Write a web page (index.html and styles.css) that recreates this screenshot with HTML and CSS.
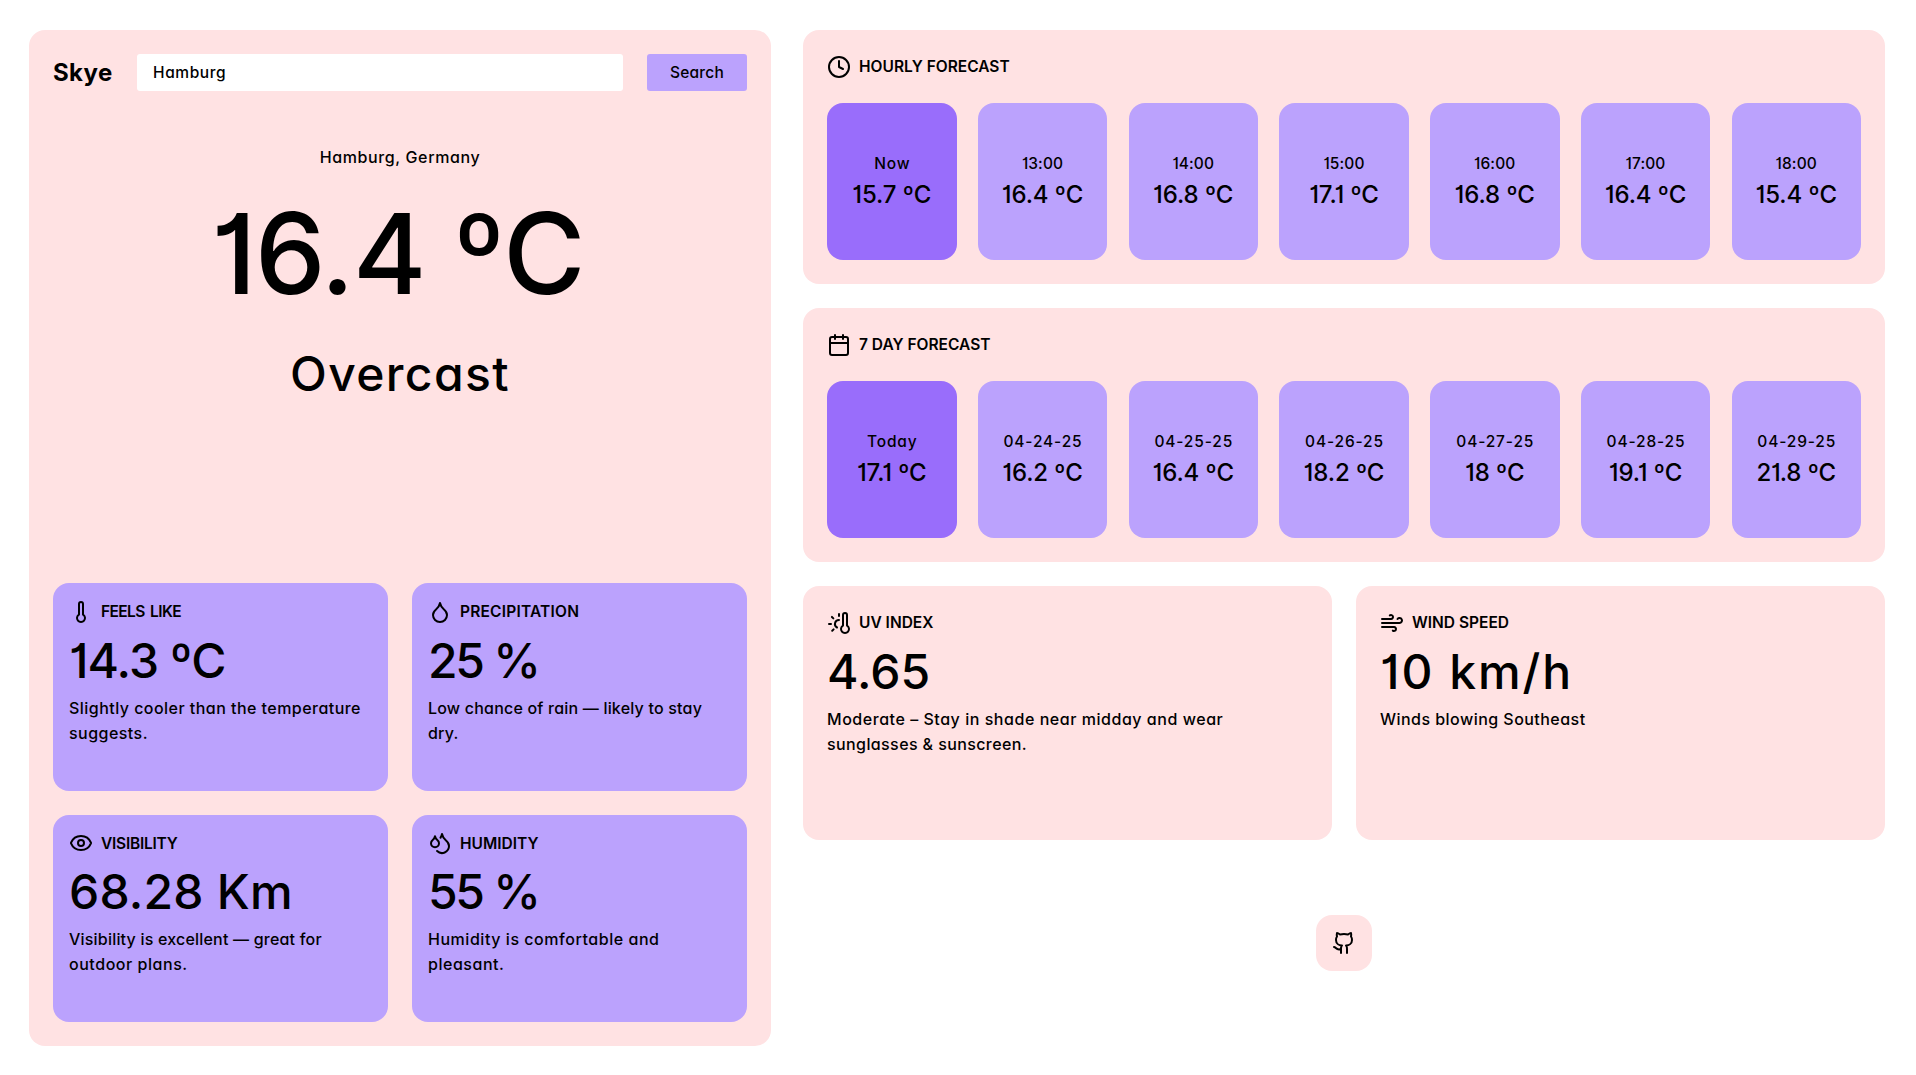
FILE: index.html
```
<!DOCTYPE html>
<html lang="en">
<head>
<meta charset="utf-8">
<title>Skye</title>
<link rel="stylesheet" href="styles.css">
</head>
<body>
<main class="app">
  <section class="panel current">
    <header class="topbar">
      <h1 class="brand">Skye</h1>
      <input class="search-input" type="text" value="Hamburg" aria-label="City">
      <button class="search-button">Search</button>
    </header>
    <div class="summary">
      <p class="location">Hamburg, Germany</p>
      <p class="temperature">16.4 ºC</p>
      <p class="condition">Overcast</p>
    </div>
    <div class="stats">
      <article class="stat">
        <h2 class="label tight"><svg class="icon" viewBox="0 0 24 24"><path d="M14 4v10.54a4 4 0 1 1-4 0V4a2 2 0 0 1 4 0Z"/></svg>FEELS LIKE</h2>
        <p class="value value-feels">14.3 ºC</p>
        <p class="note">Slightly cooler than the temperature suggests.</p>
      </article>
      <article class="stat">
        <h2 class="label wide"><svg class="icon" viewBox="0 0 24 24"><path d="M12 22a7 7 0 0 0 7-7c0-2-1-3.9-3-5.5s-3.5-4-4-6.5c-.5 2.5-2 4.9-4 6.5C6 11.1 5 13 5 15a7 7 0 0 0 7 7z"/></svg>PRECIPITATION</h2>
        <p class="value value-percent">25 %</p>
        <p class="note note-snug">Low chance of rain — likely to stay dry.</p>
      </article>
      <article class="stat">
        <h2 class="label snug"><svg class="icon" viewBox="0 0 24 24"><path d="M2.062 12.348a1 1 0 0 1 0-.696 10.75 10.75 0 0 1 19.876 0 1 1 0 0 1 0 .696 10.75 10.75 0 0 1-19.876 0"/><circle cx="12" cy="12" r="3"/></svg>VISIBILITY</h2>
        <p class="value value-distance">68.28 Km</p>
        <p class="note note-snug">Visibility is excellent — great for <span class="note-loose">outdoor plans.</span></p>
      </article>
      <article class="stat">
        <h2 class="label"><svg class="icon" viewBox="0 0 24 24"><path d="M7 16.3c2.2 0 4-1.83 4-4.05 0-1.16-.57-2.26-1.71-3.19S7.29 6.75 7 5.3c-.29 1.45-1.14 2.84-2.29 3.76S3 11.1 3 12.25c0 2.22 1.8 4.05 4 4.05z"/><path d="M12.56 6.6A10.97 10.97 0 0 0 14 3.02c.5 2.5 2 4.9 4 6.5s3 3.5 3 5.5a6.98 6.98 0 0 1-11.91 4.97"/></svg>HUMIDITY</h2>
        <p class="value value-percent">55 %</p>
        <p class="note note-loose">Humidity is comfortable and pleasant.</p>
      </article>
    </div>
  </section>

  <div class="side">
    <section class="panel forecast">
      <h2 class="label"><svg class="icon" viewBox="0 0 24 24"><circle cx="12" cy="12" r="10"/><path d="M12 6v6l4 2"/></svg>HOURLY FORECAST</h2>
      <ul class="tiles">
        <li class="tile active"><span class="when word">Now</span><span class="temp">15.7 ºC</span></li>
        <li class="tile"><span class="when">13:00</span><span class="temp">16.4 ºC</span></li>
        <li class="tile"><span class="when">14:00</span><span class="temp">16.8 ºC</span></li>
        <li class="tile"><span class="when">15:00</span><span class="temp">17.1 ºC</span></li>
        <li class="tile"><span class="when">16:00</span><span class="temp">16.8 ºC</span></li>
        <li class="tile"><span class="when">17:00</span><span class="temp">16.4 ºC</span></li>
        <li class="tile"><span class="when">18:00</span><span class="temp">15.4 ºC</span></li>
      </ul>
    </section>

    <section class="panel forecast">
      <h2 class="label"><svg class="icon" viewBox="0 0 24 24"><path d="M8 2v4M16 2v4M3 10h18"/><rect x="3" y="4" width="18" height="18" rx="2"/></svg>7 DAY FORECAST</h2>
      <ul class="tiles">
        <li class="tile active"><span class="when word">Today</span><span class="temp">17.1 ºC</span></li>
        <li class="tile"><span class="when date">04-24-25</span><span class="temp">16.2 ºC</span></li>
        <li class="tile"><span class="when date">04-25-25</span><span class="temp">16.4 ºC</span></li>
        <li class="tile"><span class="when date">04-26-25</span><span class="temp">18.2 ºC</span></li>
        <li class="tile"><span class="when date">04-27-25</span><span class="temp">18 ºC</span></li>
        <li class="tile"><span class="when date">04-28-25</span><span class="temp">19.1 ºC</span></li>
        <li class="tile"><span class="when date">04-29-25</span><span class="temp">21.8 ºC</span></li>
      </ul>
    </section>

    <div class="pair">
      <section class="panel">
        <h2 class="label"><svg class="icon" viewBox="0 0 24 24"><path d="M12 9a4 4 0 0 0-2 7.5"/><path d="M12 3v2"/><path d="m6.6 18.4-1.4 1.4"/><path d="M20 4v10.54a4 4 0 1 1-4 0V4a2 2 0 0 1 4 0Z"/><path d="M4 13H2"/><path d="M6.34 7.34 4.93 5.93"/></svg>UV INDEX</h2>
        <p class="value">4.65</p>
        <p class="note note-loose">Moderate – Stay in shade near midday and wear <span class="note-end">sunglasses &amp; sunscreen.</span></p>
      </section>
      <section class="panel">
        <h2 class="label"><svg class="icon" viewBox="0 0 24 24"><path d="M12.8 19.6A2 2 0 1 0 14 16H2"/><path d="M17.5 8a2.5 2.5 0 1 1 2 4H2"/><path d="M9.8 4.4A2 2 0 1 1 11 8H2"/></svg>WIND SPEED</h2>
        <p class="value value-speed">10 km/h</p>
        <p class="note">Winds blowing Southeast</p>
      </section>
    </div>

    <footer class="footer">
      <a class="repo" aria-label="GitHub"><svg class="icon" viewBox="0 0 24 24"><path d="M15 22v-4a4.8 4.8 0 0 0-1-3.5c3 0 6-2 6-5.5.08-1.25-.27-2.48-1-3.5.28-1.15.28-2.35 0-3.5 0 0-1 0-3 1.5-2.64-.5-5.36-.5-8 0C6 2 5 2 5 2c-.3 1.15-.3 2.35 0 3.5A5.403 5.403 0 0 0 4 9c0 3.5 3 5.5 6 5.5-.39.49-.68 1.05-.85 1.65-.17.6-.22 1.23-.15 1.85v4"/><path d="M9 18c-4.510 2-5-2-7-2"/></svg></a>
    </footer>
  </div>
</main>
</body>
</html>
```
FILE: styles.css
```
* {
  box-sizing: border-box;
  margin: 0;
  padding: 0;
}

body {
  background: #fff;
  color: #000;
  font-family: Inter, "Open Sans", sans-serif;
  font-size: 16px;
  font-weight: 500;
  line-height: 25.6px;
  font-feature-settings: "cv11", "cv01";
}

.app {
  display: grid;
  grid-template-columns: 742px 1082px;
  gap: 32px;
  height: 1075px;
  padding: 30px 31px 29px 29px;
}

.panel {
  padding: 24px;
  border-radius: 16px;
  background: #ffe2e3;
}

.current {
  display: flex;
  flex-direction: column;
}

/* Search header */
.topbar {
  display: flex;
  align-items: stretch;
  gap: 24px;
  height: 37px;
}

.brand {
  width: 60px;
  font-size: 24px;
  font-weight: 700;
  line-height: 37px;
  letter-spacing: 0.4px;
}

.search-input,
.search-button {
  border: 0;
  border-radius: 3px;
  color: inherit;
  font: inherit;
  font-feature-settings: inherit;
}

.search-input {
  flex: 1;
  min-width: 0;
  padding: 0 16px;
  background: #fff;
  font-size: 15.5px;
  letter-spacing: 0.6px;
}

.search-button {
  width: 100px;
  background: #bba2fd;
  font-size: 15.5px;
  letter-spacing: 0.2px;
}

/* Current conditions */
.summary {
  flex: 1;
  padding-top: 53.6px;
  text-align: center;
}

.location {
  letter-spacing: 0.62px;
}

.temperature {
  padding-right: 5px;
  font-size: 112px;
  line-height: 166px;
  letter-spacing: -1.5px;
}

.condition {
  font-size: 48px;
  line-height: 76px;
  letter-spacing: 1.4px;
}

.stats {
  display: grid;
  grid-template-columns: 1fr 1fr;
  grid-auto-rows: 207.5px;
  gap: 24px;
}

.stat {
  padding: 16px;
  border-radius: 16px;
  background: #bba2fd;
}

/* Shared text blocks */
.label {
  display: flex;
  align-items: center;
  gap: 8px;
  height: 25.6px;
  font-size: 15.5px;
  font-weight: 600;
}

.tight { letter-spacing: -0.6px; word-spacing: 2px; }
.snug { letter-spacing: -0.25px; }
.wide { letter-spacing: 0.2px; }

.icon {
  flex: none;
  width: 24px;
  height: 24px;
  fill: none;
  stroke: #000;
  stroke-width: 2;
  stroke-linecap: round;
  stroke-linejoin: round;
}

.value {
  font-size: 48px;
  line-height: 71px;
}

.value-feels { letter-spacing: -0.9px; }
.value-percent { letter-spacing: -2.3px; }
.value-distance { letter-spacing: 0.2px; }
.value-speed { letter-spacing: 1.95px; }

.note {
  line-height: 25.3px;
  letter-spacing: 0.46px;
}

.note-snug { letter-spacing: 0.2px; }
.note-loose { letter-spacing: 0.54px; }
.note-end { letter-spacing: 0.4px; }

/* Forecasts */
.side {
  display: grid;
  grid-template-rows: repeat(3, 254px) 1fr;
  row-gap: 24px;
}

.forecast {
  display: flex;
  flex-direction: column;
  gap: 23.4px;
}

.tiles {
  display: flex;
  flex: 1;
  justify-content: space-between;
  list-style: none;
}

.tile {
  display: flex;
  flex-direction: column;
  align-items: center;
  justify-content: center;
  width: 129.5px;
  padding-top: 2px;
  border-radius: 16px;
  background: #bba2fd;
}

.active {
  background: #996dfb;
}

.when {
  font-size: 15.5px;
  letter-spacing: 0.1px;
}

.word,
.date {
  padding-left: 1px;
  letter-spacing: 0.85px;
}

.temp {
  font-size: 24px;
  line-height: 36.6px;
  letter-spacing: -0.1px;
}

.pair {
  display: grid;
  grid-template-columns: 1fr 1fr;
  gap: 24px;
}

.footer {
  display: flex;
  align-items: center;
  justify-content: center;
  padding-bottom: 24px;
}

.repo {
  display: flex;
  padding: 16px;
  border-radius: 16px;
  background: #ffe2e3;
}
```
